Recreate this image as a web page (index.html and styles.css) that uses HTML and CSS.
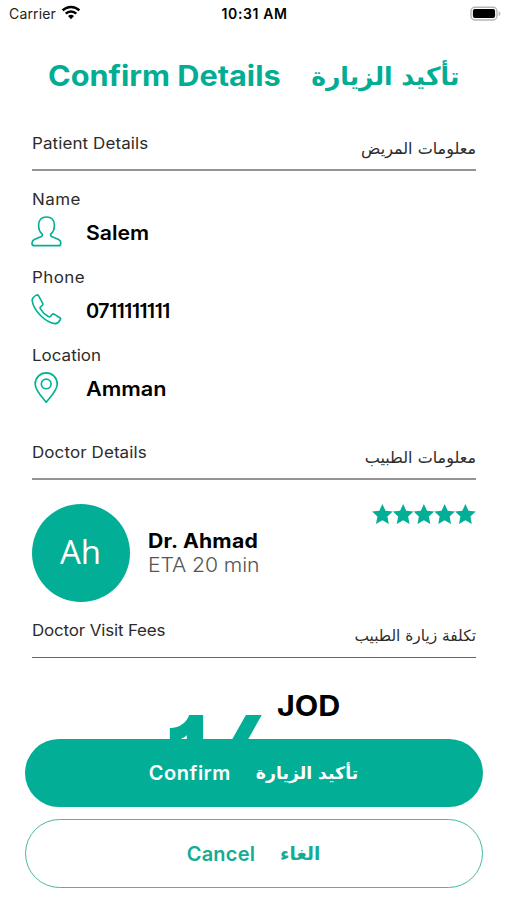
FILE: index.html
```html
<!DOCTYPE html>
<html lang="en">
<head>
<meta charset="utf-8">
<title>Confirm Details</title>
<link rel="stylesheet" href="styles.css">
</head>
<body>
<header class="status">
  <div class="carrier"><span>Carrier</span>
    <svg width="20" height="15" viewBox="0 0 20 15"><g fill="none" stroke="#000" stroke-width="2.5"><path d="M1.6 5.4a12 12 0 0 1 16.8 0"/><path d="M4.7 8.7a7.6 7.6 0 0 1 10.6 0"/></g><path d="M10 14.2l3-3.1a4.4 4.4 0 0 0-6 0z"/></svg>
  </div>
  <div class="time">10:31 AM</div>
  <div class="battery"><svg width="32" height="16" viewBox="0 0 32 16"><rect x="1" y="1.2" width="26" height="12.8" rx="4" fill="#fff" stroke="#b5b5b5" stroke-width="1.4"/><rect x="2.9" y="3.1" width="22.2" height="9" rx="2" fill="#000"/><path d="M28.7 5.2c2.2.9 2.2 4 0 4.9z" fill="#b5b5b5"/></svg></div>
</header>
<main>
  <h1 class="title"><span class="en">Confirm Details</span><span class="ar" lang="ar" dir="rtl">تأكيد الزيارة</span></h1>

  <section class="patient">
    <h2 class="head"><span class="en">Patient Details</span><span class="ar" lang="ar" dir="rtl">معلومات المريض</span></h2>
    <div class="fields">
      <div class="field">
        <div class="label wide">Name</div>
        <div class="value"><svg class="icon" viewBox="0 0 32 32"><path d="M11.5 18.500C8.200 15.800 7.700 12 7.900 9c.2-4.900 3.200-8 8.100-8s7.900 3.100 8.100 8c.2 3-.3 6.800-3.600 9.500-.5 1-.3 2 .8 2.600l7.200 3.200c1.800.9 2.300 2 2.300 3.700 0 2-.7 2.600-2.300 2.600h-25C1.800 30.600 1 30 1 28c0-1.700.6-2.800 2.400-3.700l7.300-3.200c1.100-.6 1.300-1.600.8-2.600z"/></svg><span class="en">Salem</span></div>
      </div>
      <div class="field">
        <div class="label wide">Phone</div>
        <div class="value"><svg class="icon" viewBox="0 0 32 32"><path d="M5.500 1.200C3.300 2.500 1.200 4 1.200 6.500c.5 5.500 4.300 11.300 8.600 15.700 4.300 4.300 9.800 7.700 14.800 8.400 2.700.2 4.500-2 5.700-4 .4-.9.200-1.600-.5-2.100l-5.900-3.700c-.8-.4-1.500-.3-2.100.4l-1.700 1.900c-.7.7-1.400.6-2.200.2-3.500-1.900-6.200-4.700-8.200-8-.5-.9-.4-1.500.3-2.100l1.700-1.600c.7-.7.8-1.300.3-2.100L7.700 1.700c-.6-.8-1.300-1-2.200-.5z"/></svg><span class="number">0711111111</span></div>
      </div>
      <div class="field">
        <div class="label">Location</div>
        <div class="value"><svg class="icon" viewBox="0 0 32 32"><path d="M15.700 31.300C12 26.300 4.300 19 4.300 12.300a11.400 11.400 0 0 1 22.800 0c0 6.700-7.700 14-11.400 19z"/><circle cx="15.700" cy="12.300" r="5"/></svg><span class="en amman">Amman</span></div>
      </div>
    </div>
  </section>

  <section class="doctor">
    <h2 class="head"><span class="en">Doctor Details</span><span class="ar" lang="ar" dir="rtl">معلومات الطبيب</span></h2>
    <div class="card">
      <div class="avatar">Ah</div>
      <div class="who"><div class="name">Dr. Ahmad</div><div class="eta">ETA 20 min</div></div>
      <svg class="stars" width="104" height="21" viewBox="0 0 104 21"><defs><path id="star" d="M10.400 0l3.100 6.700 7.200.9-5.300 5 1.400 7.400-6.400-3.700L4 20l1.400-7.400-5.300-5 7.200-.9z"/></defs><use href="#star"/><use href="#star" x="20.750"/><use href="#star" x="41.500"/><use href="#star" x="62.250"/><use href="#star" x="83"/></svg>
    </div>
  </section>

  <section class="fees">
    <h2 class="head thin"><span class="en tight">Doctor Visit Fees</span><span class="ar" lang="ar" dir="rtl">تكلفة زيارة الطبيب</span></h2>
    <div class="price"><span class="amount">14</span><span class="currency">JOD</span></div>
  </section>
</main>
<footer class="actions">
  <button class="btn primary"><span>Confirm</span><span class="ar" lang="ar" dir="rtl">تأكيد الزيارة</span></button>
  <button class="btn outline"><span>Cancel</span><span class="ar" lang="ar" dir="rtl">الغاء</span></button>
</footer>
</body>
</html>
```
FILE: styles.css
```css
* { box-sizing: border-box; }
html, body { height: 900px; overflow: hidden; }
body {
  margin: 0;
  position: relative;
  background: #fff;
  color: #000;
  font-family: Inter, "DejaVu Sans", sans-serif;
}
svg { display: block; }
.ar { font-family: "DejaVu Sans", sans-serif; letter-spacing: 0; }

.en, .label, .name, .eta, .currency {
  transform: scaleX(1.06);
  transform-origin: left center;
}

.status {
  display: grid;
  grid-template-columns: 1fr auto 1fr;
  align-items: center;
  height: 28px;
  padding: 0 5px 0 9px;
  font-size: 14px;
}
.carrier { display: flex; align-items: center; gap: 5px; letter-spacing: .15px; color: #222; margin-top: -1px; }
.carrier svg { margin-top: -2px; }
.time { font-weight: 600; letter-spacing: .6px; margin: -1px 2px 0 0; }
.battery { justify-self: end; margin-top: -1px; }

.title {
  display: flex;
  justify-content: center;
  align-items: center;
  gap: 31px;
  height: 40px;
  margin: 28px 0 34px;
  color: #02ad94;
  font-size: 28px;
  font-weight: 700;
}
.title .en { margin-right: 20px; transform: scaleX(1.095); }
.title .ar { font-size: 25px; }

section { margin: 0 31px 0 32px; }
.head {
  display: flex;
  justify-content: space-between;
  height: 41px;
  margin: 0;
  border-bottom: 2px solid #949494;
  color: #2b2b2b;
  font-size: 16px;
  font-weight: 400;
  line-height: 26px;
  letter-spacing: .1px;
}
.head .ar { padding-top: 6px; letter-spacing: 0; }
.thin { border-bottom: 1px solid #666; }
.thin .ar { font-size: 15.400px; }
.tight { letter-spacing: -.15px; }

.fields { padding-top: 17px; }
.field { height: 78px; }
.label { height: 22px; line-height: 22px; font-size: 16px; letter-spacing: 0; color: #2b2b2b; }
.wide { letter-spacing: .4px; }
.value {
  display: flex;
  align-items: center;
  gap: 24px;
  height: 45px;
  font-size: 20px;
  font-weight: 600;
}
.icon { width: 31px; height: 31px; margin: -3px 0 0 -1px; fill: none; stroke: #02b095; stroke-width: 1.700; }
.number { letter-spacing: -.7px; font-feature-settings: "cv01"; }
.amman { transform: scaleX(1.085); }

.doctor { margin-top: 17px; }
.card { display: flex; padding-top: 24px; height: 137px; }
.avatar {
  width: 98px;
  height: 98px;
  margin: -.5px .5px 0 -.5px;
  border-radius: 50%;
  background: #02ae95;
  color: #fff;
  font: 400 33px/95px "Open Sans", sans-serif;
  text-align: center;
}
.who { margin: 25px 0 0 18px; font-size: 20px; line-height: 24px; }
.name { font-weight: 700; letter-spacing: .2px; }
.eta { font-weight: 300; letter-spacing: -.1px; color: #555; }
.stars { margin-left: auto; fill: #02ae95; }

.price { display: flex; padding: 30px 0 0 132px; }
.amount {
  width: 113px;
  color: #02ae95;
  font-size: 110px;
  font-weight: 700;
  line-height: 134px;
  font-feature-settings: "cv01", "cv02";
}
.currency { font-size: 28px; font-weight: 700; line-height: 36px; transform: scaleX(1.090); }

.actions {
  position: absolute;
  left: 25px;
  right: 24px;
  top: 739px;
  display: grid;
  gap: 12px;
}
.btn {
  display: flex;
  justify-content: center;
  align-items: center;
  gap: 25px;
  height: 68px;
  padding: 0 1px 0 0;
  border: 0;
  border-radius: 35px;
  font: 600 20px Inter, sans-serif;
  letter-spacing: .5px;
}
.btn .ar { font: 700 17.300px "DejaVu Sans", sans-serif; }
.primary { background: #02ae95; color: #fff; }
.outline { height: 69px; border: 1.500px solid #45b9a6; background: #fff; color: #16ab93; letter-spacing: .2px; }
.outline .ar { font-size: 18.500px; }
```
